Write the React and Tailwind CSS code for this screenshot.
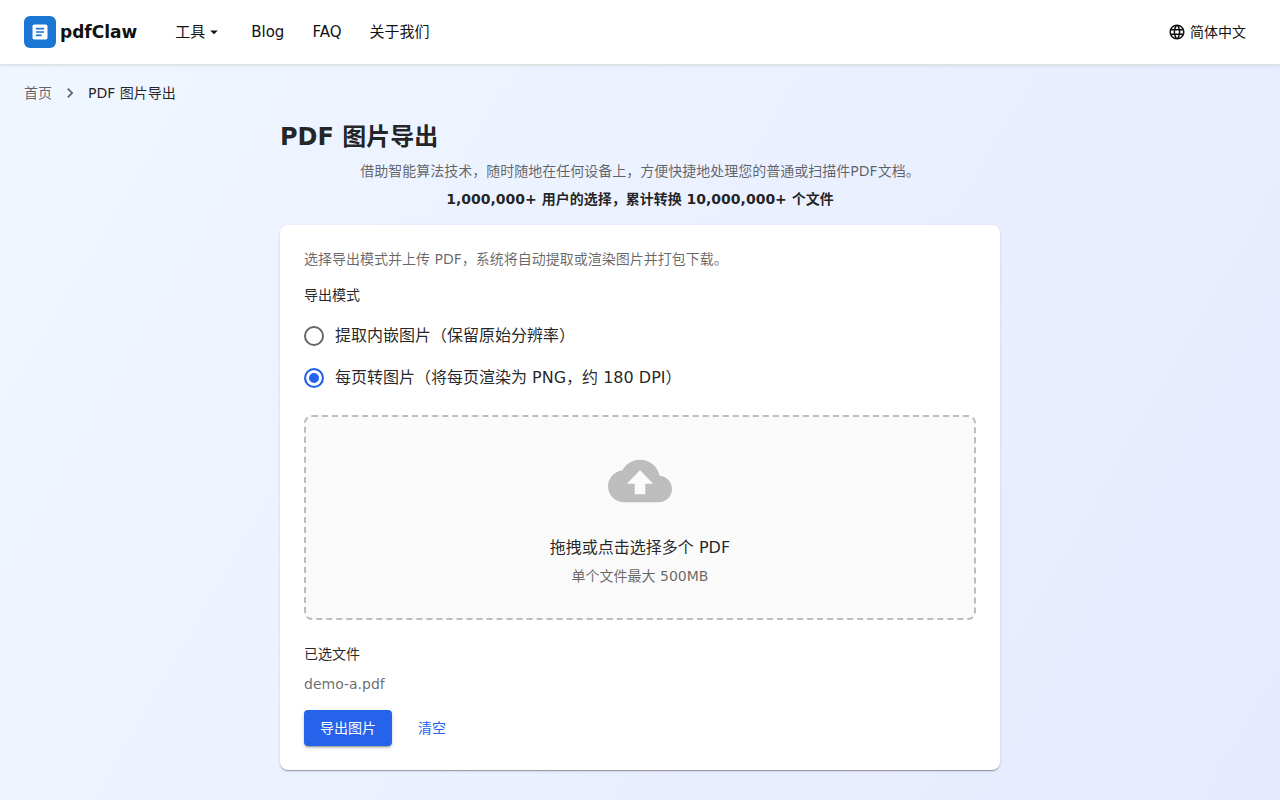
import React, { useState } from 'react';
import {
  MdArrowDropDown,
  MdArticle,
  MdCloudUpload,
  MdLanguage,
  MdNavigateNext,
} from 'react-icons/md';

const MODES = [
  { id: 'embedded', label: '提取内嵌图片（保留原始分辨率）' },
  { id: 'pages', label: '每页转图片（将每页渲染为 PNG，约 180 DPI）' },
];

const Header = () => (
  <header className="relative flex h-[65px] items-center border-b border-black/12 bg-white px-6 text-[#111111] shadow-[0_1px_3px_rgba(0,0,0,0.08)]">
    <a href="#home" className="flex items-center gap-1">
      <span className="flex size-8 items-center justify-center rounded-md bg-[#1976d2]">
        <MdArticle className="size-5 text-white" />
      </span>
      <span className="text-[17px] leading-6 font-bold">pdfClaw</span>
    </a>
    <nav className="ml-[38px] flex items-center gap-7 text-[15px] leading-6">
      <button type="button" className="flex cursor-pointer items-center">
        工具
        <MdArrowDropDown className="size-[18px]" />
      </button>
      <a href="#blog">Blog</a>
      <a href="#faq">FAQ</a>
      <a href="#about">关于我们</a>
    </nav>
    <button type="button" className="ml-auto flex cursor-pointer items-center gap-1 px-2.5 text-sm">
      <MdLanguage className="size-[18px]" />
      简体中文
    </button>
  </header>
);

const Breadcrumbs = () => (
  <nav aria-label="breadcrumb" className="px-6 pt-[18px] text-sm">
    <ol className="flex items-center gap-2">
      <li className="text-black/60">
        <a href="#home">首页</a>
      </li>
      <li aria-hidden="true" className="text-black/60">
        <MdNavigateNext className="size-5" />
      </li>
      <li>PDF 图片导出</li>
    </ol>
  </nav>
);

const ModePicker = ({ mode, onChange }) => (
  <fieldset>
    <legend className="pt-4 pb-2.5 text-sm">导出模式</legend>
    {MODES.map((item) => (
      <label key={item.id} className="flex h-[42px] cursor-pointer items-center gap-[11px]">
        <input
          type="radio"
          name="mode"
          value={item.id}
          checked={mode === item.id}
          onChange={() => onChange(item.id)}
          className="size-5 appearance-none rounded-full border-2 border-black/60 bg-white checked:border-[#2563eb] checked:bg-[#2563eb] checked:shadow-[inset_0_0_0_3px_#fff]"
        />
        <span>{item.label}</span>
      </label>
    ))}
  </fieldset>
);

const App = () => {
  const [mode, setMode] = useState('pages');
  const [files, setFiles] = useState(['demo-a.pdf']);

  return (
    <div
      lang="zh-CN"
      className="min-h-screen bg-linear-120 from-[#f0f7ff] to-[#e5eaff] font-['DejaVu_Sans','Noto_Sans_CJK_SC',sans-serif] text-black/87"
    >
      <Header />
      <Breadcrumbs />

      <main className="mx-auto max-w-[720px] pt-4 pb-[30px]">
        <h1 className="text-2xl leading-9 font-bold">PDF 图片导出</h1>
        <p className="mt-1.5 text-center text-sm text-black/60">
          借助智能算法技术，随时随地在任何设备上，方便快捷地处理您的普通或扫描件PDF文档。
        </p>
        <p className="mt-2 text-center text-sm font-bold">
          1,000,000+ 用户的选择，累计转换 10,000,000+ 个文件
        </p>

        <section className="mt-4 rounded-lg bg-white p-6 shadow-[0_2px_1px_-1px_rgba(0,0,0,0.2),0_1px_1px_rgba(0,0,0,0.14),0_1px_3px_rgba(0,0,0,0.12)]">
          <p className="text-sm text-black/60">
            选择导出模式并上传 PDF，系统将自动提取或渲染图片并打包下载。
          </p>
          <ModePicker mode={mode} onChange={setMode} />

          <button
            type="button"
            className="mt-4 flex w-full cursor-pointer flex-col items-center rounded-lg border-2 border-dashed border-[#bdbdbd] bg-[#fafafa] p-8"
          >
            <MdCloudUpload className="mb-[21px] size-16 text-[#bdbdbd]" />
            <span className="leading-7">拖拽或点击选择多个 PDF</span>
            <span className="mt-1 text-sm text-black/60">单个文件最大 500MB</span>
          </button>

          <h2 className="mt-6 text-sm">已选文件</h2>
          <ul className="mt-2.5 text-sm text-black/60">
            {files.map((file) => (
              <li key={file}>{file}</li>
            ))}
          </ul>

          <div className="mt-4 flex gap-2 text-sm">
            <button
              type="button"
              className="h-9 cursor-pointer rounded bg-[#2563eb] px-4 text-white shadow-[0_3px_1px_-2px_rgba(0,0,0,0.2),0_2px_2px_rgba(0,0,0,0.14),0_1px_5px_rgba(0,0,0,0.12)]"
            >
              导出图片
            </button>
            <button
              type="button"
              className="h-9 min-w-16 cursor-pointer rounded px-2 text-[#2563eb]"
              onClick={() => setFiles([])}
            >
              清空
            </button>
          </div>
        </section>
      </main>
    </div>
  );
};

export default App;
